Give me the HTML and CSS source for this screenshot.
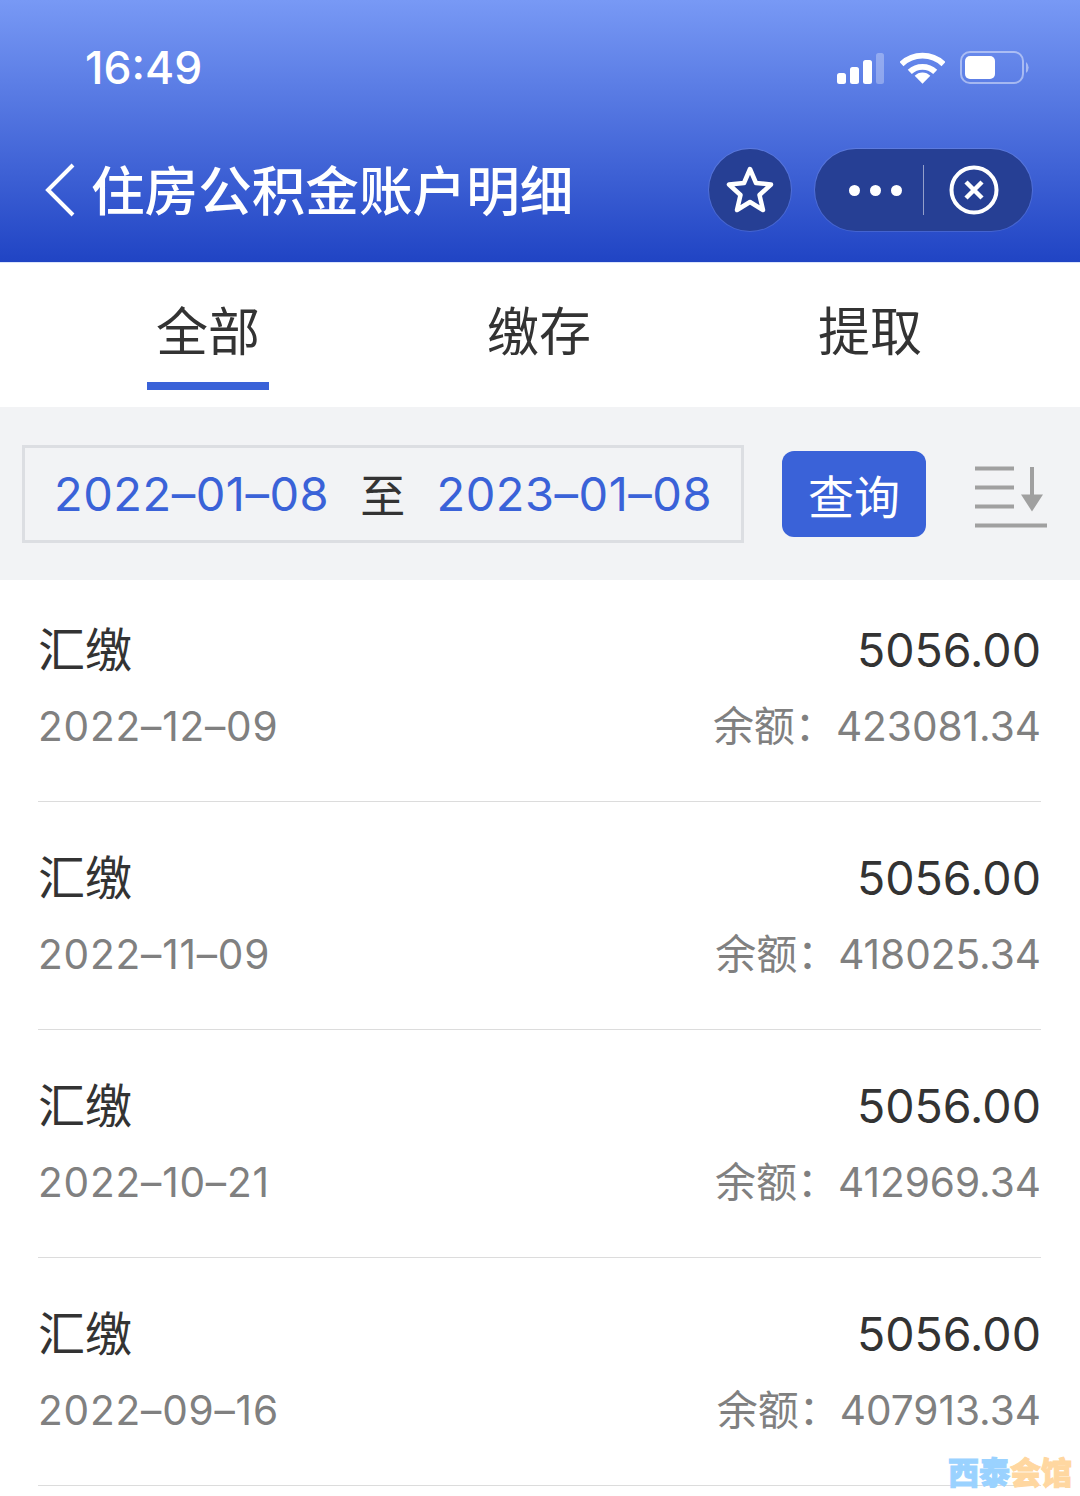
FILE: index.html
```html
<!DOCTYPE html>
<html lang="zh-CN">
<head>
    <meta charset="UTF-8">
    <meta name="viewport" content="width=device-width, initial-scale=1.0">
    <title>住房公积金账户明细</title>
    <link rel="stylesheet" href="styles.css">
</head>
<body>
    <header class="top">
        <div class="status">
            <span class="time">16:49</span>
            <div class="status-icons">
                <svg width="48" height="31" viewBox="0 0 48 31">
                    <rect x="0" y="20" width="9" height="11" rx="2.5" fill="#fff"/>
                    <rect x="13" y="14" width="9" height="17" rx="2.5" fill="#fff"/>
                    <rect x="26" y="7" width="9" height="24" rx="2.5" fill="#fff"/>
                    <rect x="39" y="0" width="8" height="31" rx="2.5" fill="#fff" fill-opacity=".3"/>
                </svg>
                <svg width="45" height="34" viewBox="0 0 46 34">
                    <path d="M1.500 13 A31 31 0 0 1 44.500 13" fill="none" stroke="#fff" stroke-width="6"/>
                    <path d="M10 21 A19 19 0 0 1 36 21" fill="none" stroke="#fff" stroke-width="6"/>
                    <path d="M23 33 L15 25 A11 11 0 0 1 31 25 Z" fill="#fff"/>
                </svg>
                <svg width="70" height="34" viewBox="0 0 70 34">
                    <rect x="1" y="1" width="62" height="31" rx="9" fill="none" stroke="#fff" stroke-opacity=".45" stroke-width="2"/>
                    <rect x="5" y="5" width="30" height="23" rx="5" fill="#fff"/>
                    <path d="M66 11 A7 7 0 0 1 66 22 Z" fill="#fff" fill-opacity=".45"/>
                </svg>
            </div>
        </div>
        <div class="nav">
            <svg class="back" width="34" height="54" viewBox="0 0 34 54">
                <path d="M29 2 L4 27 L29 52" fill="none" stroke="#fff" stroke-width="4"/>
            </svg>
            <h1 class="title">住房公积金账户明细</h1>
            <div class="round-btn">
                <svg width="50" height="50" viewBox="0 0 50 50">
                    <path d="M25 4 L31 18 L46 19.500 L34.500 30 L38 45 L25 37 L12 45 L15.500 30 L4 19.500 L19 18 Z" fill="none" stroke="#fff" stroke-width="4.500" stroke-linejoin="round"/>
                </svg>
            </div>
            <div class="capsule">
                <div class="dots"><i></i><i></i><i></i></div>
                <div class="capsule-line"></div>
                <svg width="50" height="50" viewBox="0 0 50 50">
                    <circle cx="25" cy="25" r="22.500" fill="none" stroke="#fff" stroke-width="4"/>
                    <path d="M17 17 L33 33 M33 17 L17 33" fill="none" stroke="#fff" stroke-width="4.500"/>
                </svg>
            </div>
        </div>
    </header>

    <nav class="tabs">
        <div class="tab active"><span>全部</span></div>
        <div class="tab"><span>缴存</span></div>
        <div class="tab"><span>提取</span></div>
    </nav>

    <section class="filter">
        <div class="range">
            <span class="date">2022–01–08</span>
            <span class="to">至</span>
            <span class="date">2023–01–08</span>
        </div>
        <button class="query" type="button">查询</button>
        <svg class="sort" width="74" height="70" viewBox="0 0 74 70">
            <path d="M1 9.500 H40 M1 28.500 H40 M1 47.500 H40 M1 66.500 H73" fill="none" stroke="#a0a0a0" stroke-width="4"/>
            <path d="M58 8 V37" fill="none" stroke="#a0a0a0" stroke-width="4"/>
            <path d="M47 35.500 H69 L58 52.500 Z" fill="#a0a0a0"/>
        </svg>
    </section>

    <main class="list">
        <div class="row first">
            <div class="line"><span class="name">汇缴</span><span class="amount">5056.00</span></div>
            <div class="line sub"><span class="day">2022–12–09</span><span>余额：<b>423081.34</b></span></div>
        </div>
        <div class="row">
            <div class="line"><span class="name">汇缴</span><span class="amount">5056.00</span></div>
            <div class="line sub"><span class="day">2022–11–09</span><span>余额：<b>418025.34</b></span></div>
        </div>
        <div class="row">
            <div class="line"><span class="name">汇缴</span><span class="amount">5056.00</span></div>
            <div class="line sub"><span class="day">2022–10–21</span><span>余额：<b>412969.34</b></span></div>
        </div>
        <div class="row">
            <div class="line"><span class="name">汇缴</span><span class="amount">5056.00</span></div>
            <div class="line sub"><span class="day">2022–09–16</span><span>余额：<b>407913.34</b></span></div>
        </div>
    </main>

    <div class="watermark"><span class="wm-blue">西泰</span><span class="wm-orange">会馆</span></div>
</body>
</html>
```

FILE: styles.css
```css
* {
    box-sizing: border-box;
}

html,
body {
    margin: 0;
    height: 1496px;
    overflow: hidden;
}

body {
    position: relative;
    background: #fff;
    font-family: Inter, "Noto Sans CJK SC", sans-serif;
    color: #333;
}

.top {
    height: 263px;
    padding-top: 47px;
    background: linear-gradient(#7899f5, #2044c4);
    border-bottom: 1px solid #dbe4fb;
    color: #fff;
}

.status {
    display: flex;
    align-items: center;
    justify-content: space-between;
    height: 42px;
    padding: 0 50px 0 85px;
}

.time {
    font-size: 44.500px;
    font-weight: 500;
}

.status-icons {
    display: flex;
    align-items: center;
    gap: 15px;
}

.nav {
    display: flex;
    align-items: center;
    height: 84px;
    margin-top: 59px;
    padding: 0 48px 0 44px;
}

.back {
    flex: none;
}

.title {
    flex: 1;
    margin: 0 0 0 13px;
    padding-bottom: 6px;
    font-size: 53.600px;
    font-weight: 500;
    white-space: nowrap;
}

.round-btn {
    display: flex;
    align-items: center;
    justify-content: center;
    width: 82px;
    height: 82px;
    margin-right: 24px;
    border-radius: 50%;
    background: #263f94;
    box-shadow: 0 0 0 1px rgba(255, 255, 255, .12);
}

.capsule {
    display: flex;
    align-items: center;
    width: 217px;
    height: 82px;
    padding-left: 34px;
    border-radius: 41px;
    background: #263f94;
    box-shadow: 0 0 0 1px rgba(255, 255, 255, .12);
}

.dots {
    display: flex;
    gap: 10px;
}

.dots i {
    width: 11px;
    height: 11px;
    border-radius: 50%;
    background: #fff;
}

.capsule-line {
    width: 1px;
    height: 50px;
    margin: 0 25px 0 21px;
    background: rgba(255, 255, 255, .5);
}

.tabs {
    display: grid;
    grid-template-columns: repeat(3, 331px);
    justify-content: center;
    height: 144px;
    padding: 0 45px 0 43px;
}

.tab {
    display: flex;
    justify-content: center;
    padding-top: 37px;
    font-size: 52px;
    line-height: 66px;
}

.tab span {
    height: 90px;
    padding: 0 9px;
}

.tab.active span {
    border-bottom: 8px solid #3a62d8;
}

.filter {
    display: flex;
    align-items: center;
    height: 173px;
    padding: 0 32px 0 22px;
    background: #f2f3f5;
}

.range {
    display: flex;
    flex: none;
    align-items: center;
    justify-content: space-between;
    width: 722px;
    height: 98px;
    padding: 0 29px;
    border: 3px solid #dcdee2;
}

.date {
    font-size: 47px;
    letter-spacing: .5px;
    color: #3a62d8;
}

.to {
    font-size: 45px;
    color: #333;
}

.query {
    flex: none;
    width: 144px;
    height: 86px;
    margin-left: 38px;
    border: none;
    border-radius: 12px;
    background: #3a62d8;
    color: #fff;
    font-family: inherit;
    font-size: 46px;
}

.sort {
    flex: none;
    margin-left: 48px;
}

.row {
    height: 228px;
    padding-top: 38px;
    margin: 0 39px 0 38px;
    border-bottom: 1px solid #dcdcdc;
}

.row.first {
    height: 222px;
    padding-top: 32px;
}

.line {
    display: flex;
    align-items: baseline;
    justify-content: space-between;
    height: 81px;
    font-size: 46.500px;
    color: #333;
}

.name {
    font-size: 47px;
}

.line.sub {
    height: 73px;
    font-size: 41px;
    color: #808080;
}

.line.sub b,
.day {
    font-size: 40.600px;
    font-weight: 400;
}

.day {
    letter-spacing: .8px;
}

.watermark {
    position: absolute;
    right: 8px;
    bottom: 8px;
    font-size: 31px;
    font-weight: 900;
    line-height: 30px;
    -webkit-text-stroke: 1px currentColor;
}

.wm-blue {
    color: #9ad2ff;
}

.wm-orange {
    color: #ffd7a0;
}
```
